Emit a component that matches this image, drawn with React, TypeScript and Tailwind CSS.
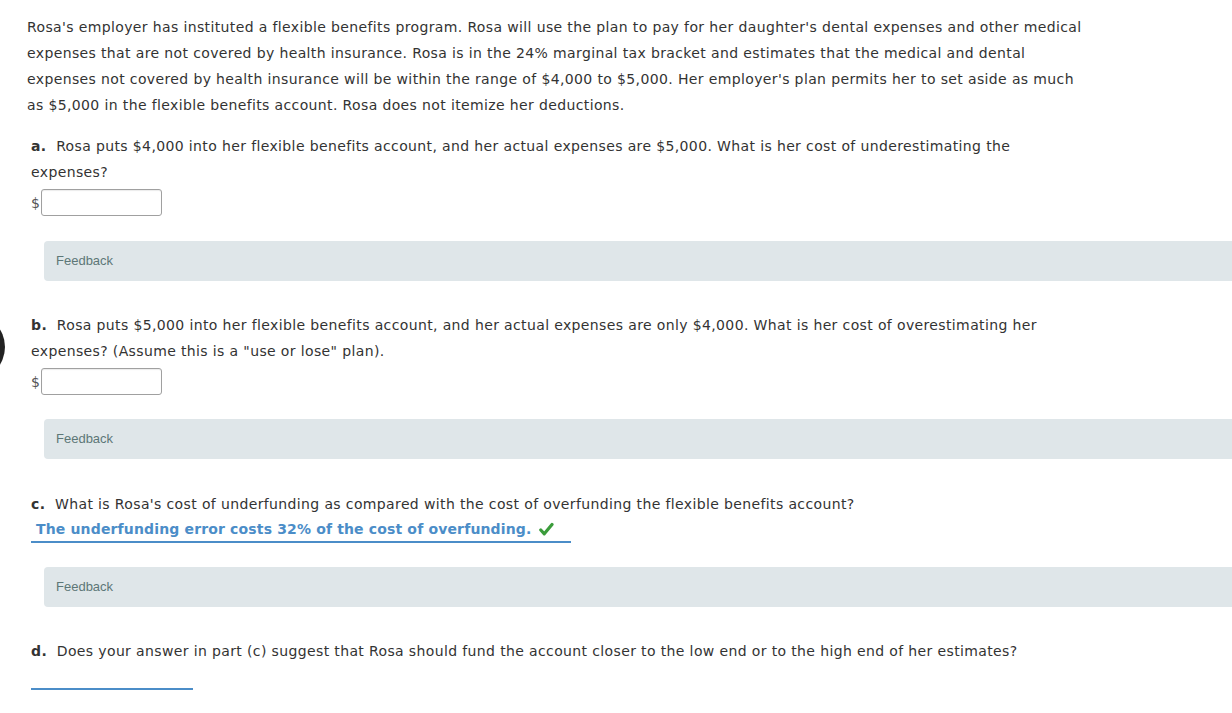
import React from 'react'

const body = "font-['DejaVu_Sans',Verdana,sans-serif] text-[14px] tracking-[0.37px] text-[#333]"

function Feedback({ gap = 'mt-[25px]' }: { gap?: string }) {
  return (
    <div className={`${gap} ml-[13px] h-[40px] flex items-center rounded-l-[4px] bg-[#dfe6e9] pl-[12px]`}>
      <span className="font-['Liberation_Sans',Arial,sans-serif] text-[13px] tracking-normal text-[#5d7777]">Feedback</span>
    </div>
  )
}

function MoneyInput() {
  return (
    <div className="mt-[4px] flex items-center">
      <span className="text-[#555] w-[10px]">$</span>
      <div className="w-[121px] h-[27px] rounded-[3px] border border-[#a0a0a0] bg-white shadow-[inset_0_1px_1px_rgba(0,0,0,0.08)]" />
    </div>
  )
}

export default function App() {
  return (
    <div className={`relative min-h-[713px] bg-white pt-[14px] pl-[27px] overflow-hidden leading-[26px] ${body}`}>
      {/* edge of a floating control on the left */}
      <div className="absolute left-[-61px] top-[314px] w-[66px] h-[66px] rounded-full bg-[#222]" />

      <p className="whitespace-nowrap">
        Rosa's employer has instituted a flexible benefits program. Rosa will use the plan to pay for her daughter's dental expenses and other medical
        <br />
        expenses that are not covered by health insurance. Rosa is in the 24% marginal tax bracket and estimates that the medical and dental
        <br />
        expenses not covered by health insurance will be within the range of $4,000 to $5,000. Her employer's plan permits her to set aside as much
        <br />
        as $5,000 in the flexible benefits account. Rosa does not itemize her deductions.
      </p>

      <div className="pl-[4px]">
        {/* a */}
        <div className="mt-[15px] whitespace-nowrap">
          <b>a.</b>&nbsp; Rosa puts $4,000 into her flexible benefits account, and her actual expenses are $5,000. What is her cost of underestimating the
          <br />
          expenses?
        </div>
        <MoneyInput />
        <Feedback />

        {/* b */}
        <div className="mt-[31px] whitespace-nowrap">
          <b>b.</b>&nbsp; Rosa puts $5,000 into her flexible benefits account, and her actual expenses are only $4,000. What is her cost of overestimating her
          <br />
          expenses? (Assume this is a "use or lose" plan).
        </div>
        <MoneyInput />
        <Feedback gap="mt-[24px]" />

        {/* c */}
        <div className="mt-[32px] whitespace-nowrap">
          <b>c.</b>&nbsp; What is Rosa's cost of underfunding as compared with the cost of overfunding the flexible benefits account?
        </div>
        <div className="w-[540px] h-[26px] border-b-2 border-[#4b8dc8] pl-[5px] leading-[24px] flex items-center gap-[7px]">
          <span className="font-bold text-[#4b8dc8] tracking-[0.15px] whitespace-nowrap">The underfunding error costs 32% of the cost of overfunding.</span>
          <svg width="15" height="15" viewBox="0 0 15 15">
            <path d="M1.8 8 L5.3 11.8 L13 2.5" fill="none" stroke="#3b9c3b" strokeWidth="3.2" strokeLinecap="round" strokeLinejoin="round" />
          </svg>
        </div>
        <Feedback gap="mt-[24px]" />

        {/* d */}
        <div className="mt-[31px] whitespace-nowrap">
          <b>d.</b>&nbsp; Does your answer in part (c) suggest that Rosa should fund the account closer to the low end or to the high end of her estimates?
        </div>
        <div className="w-[162px] h-[26px] border-b-2 border-[#4b8dc8]" />
      </div>
    </div>
  )
}
